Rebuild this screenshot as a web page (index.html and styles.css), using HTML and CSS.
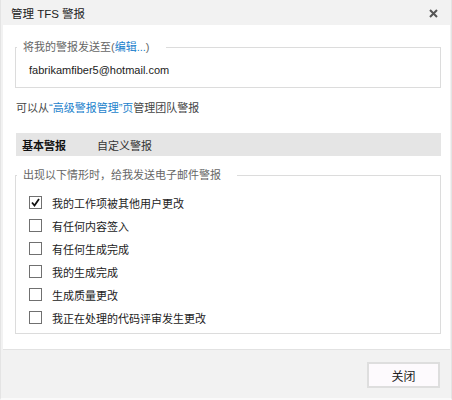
FILE: index.html
```html
<!DOCTYPE html>
<html lang="zh-CN">
<head>
<meta charset="utf-8">
<title>管理 TFS 警报</title>
<link rel="stylesheet" href="styles.css">
</head>
<body>
<div class="dialog">
  <div class="titlebar">
    <span class="title">管理 TFS 警报</span>
    <button class="close" aria-label="关闭">
      <svg width="9" height="9" viewBox="0 0 9 9"><path d="M1 1 L8 8 M8 1 L1 8" stroke="#555" stroke-width="2" fill="none"/></svg>
    </button>
  </div>
  <div class="content">
    <fieldset class="group group-email">
      <legend>将我的警报发送至(<a class="link" href="#">编辑...</a>)</legend>
      <div class="email">fabrikamfiber5@hotmail.com</div>
    </fieldset>
    <p class="info">可以从<a class="link" href="#">“高级警报管理”页</a>管理团队警报</p>
    <div class="tabs">
      <span class="tab active">基本警报</span>
      <span class="tab">自定义警报</span>
    </div>
    <fieldset class="group group-alerts">
      <legend>出现以下情形时，给我发送电子邮件警报</legend>
      <label class="row"><span class="box checked"><svg width="11" height="11" viewBox="0 0 11 11"><path d="M2 5.5 L4.5 8.5 L9 2" stroke="#111" stroke-width="1.8" fill="none"/></svg></span>我的工作项被其他用户更改</label>
      <label class="row"><span class="box"></span>有任何内容签入</label>
      <label class="row"><span class="box"></span>有任何生成完成</label>
      <label class="row"><span class="box"></span>我的生成完成</label>
      <label class="row"><span class="box"></span>生成质量更改</label>
      <label class="row"><span class="box"></span>我正在处理的代码评审发生更改</label>
    </fieldset>
  </div>
  <div class="footer">
    <button class="btn">关闭</button>
  </div>
</div>
</body>
</html>
```

FILE: styles.css
```css
* { box-sizing: border-box; }
body {
  margin: 0;
  background: #ffffff;
  font-family: "Liberation Sans", "Noto Sans CJK SC", sans-serif;
  font-size: 11px;
  color: #222;
}
.dialog {
  width: 452px;
  height: 400px;
  background: #f2f2f2;
  border-left: 1px solid #e4e4e4;
  border-right: 1px solid #e4e4e4;
  border-bottom: 2px solid #fafafa;
  display: flex;
  flex-direction: column;
}
.titlebar {
  height: 25px;
  display: flex;
  align-items: center;
  justify-content: space-between;
  padding: 1px 13px 0 10px;
}
.title {
  font-size: 11.5px;
  color: #222;
}
.close {
  border: 0;
  background: transparent;
  padding: 0;
  width: 9px;
  height: 9px;
  display: flex;
}
.content {
  margin: 0 1px 0 2px;
  background: #fff;
  height: 325px;
  border-bottom: 1px solid #e2e2e2;
  padding: 15px 9px 0 12px;
}
.group {
  margin: 0;
  border: 1px solid #dcdcdc;
  min-width: 0;
}
.group legend {
  font-size: 11px;
  line-height: 14px;
  color: #666;
  padding: 0 16px 0 6px;
  margin-left: 1px;
}
.link {
  color: #1b7fcc;
  text-decoration: none;
}
.group-email {
  padding: 9px 0 10px 0;
}
.email {
  line-height: 14px;
  color: #222;
  margin-left: 13px;
}
.info {
  margin: 13px 0 0 1px;
  line-height: 14px;
  color: #444;
}
.tabs {
  margin-top: 18px;
  margin-left: 1px;
  height: 23px;
  background: #e5e5e5;
  display: flex;
  align-items: center;
  padding-left: 6px;
  gap: 31px;
}
.tab { color: #333; }
.tab.active { font-weight: bold; color: #111; }
.group-alerts {
  margin-top: 12px;
  padding: 9px 0 4px 0;
}
.row {
  height: 23px;
  display: flex;
  align-items: center;
  gap: 10px;
  color: #222;
  margin-left: 13px;
}
.box {
  width: 13px;
  height: 13px;
  border: 1px solid #707070;
  background: #fff;
  display: flex;
  align-items: center;
  justify-content: center;
}
.footer {
  flex: 1;
  display: flex;
  justify-content: flex-end;
  align-items: flex-start;
  padding: 12px 11px 0 0;
}
.btn {
  width: 73px;
  height: 26px;
  background: #fdfafd;
  border: 2px solid #dedede;
  font-family: "Liberation Sans", "Noto Sans CJK SC", sans-serif;
  font-size: 12px;
  color: #222;
}
```
